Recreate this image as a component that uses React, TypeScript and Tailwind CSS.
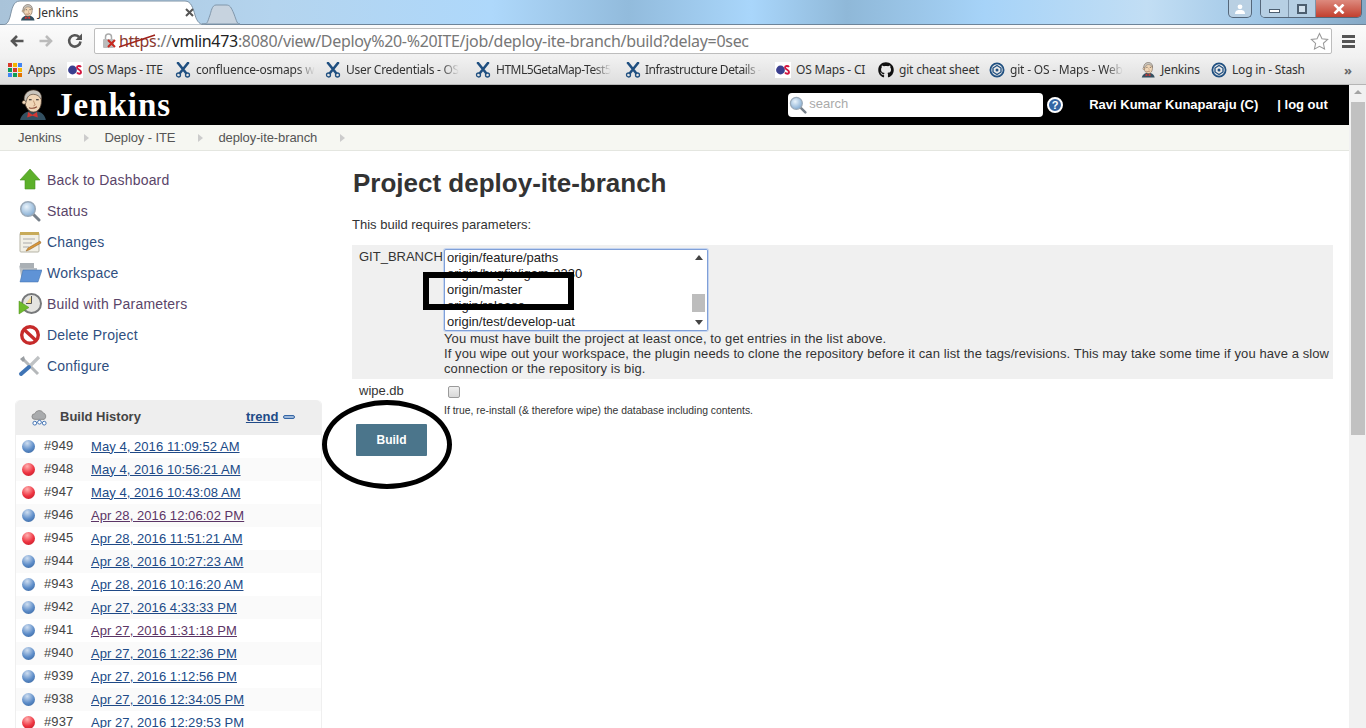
import { FaGithub } from "react-icons/fa";

function JenkinsHead({ className }: { className: string }) {
  return (
    <svg viewBox="0 0 32 36" className={className}>
      <path d="M2 35c1-6 6-9 10-10l9 0c5 1 9 4 10 10Z" fill="#335061" />
      <path d="M11 26l5 3 5-3 1 6-6-2-6 2Z" fill="#d33833" />
      <path d="M7 14C6 6 11 2 17 2s10 5 9 12c0 6-3 12-9 12-5 0-9-5-10-12Z" fill="#f0d6b7" stroke="#49382b" strokeWidth="1" />
      <path d="M7 14C5 6 11 1 17 1s10 4 9 11c-2-4-5-6-9-6-4 0-7 2-8 8Z" fill="#c9c5bd" stroke="#49382b" strokeWidth=".7" />
      <circle cx="6.5" cy="15" r="2.2" fill="#f0d6b7" stroke="#49382b" strokeWidth=".7" />
      <path d="M12 12h3M20 12h3" stroke="#231f20" strokeWidth="1.2" />
      <path d="M17 13l2 5-2 1" fill="none" stroke="#b98d6b" strokeWidth="1" />
      <path d="M12 21c3 1 6 1 9-1" fill="none" stroke="#8a4b38" strokeWidth="1.2" />
    </svg>
  );
}

function JiraX() {
  return (
    <svg viewBox="0 0 16 16" className="h-4 w-4 shrink-0">
      <path d="M3 1l8 10M13 1L5 11" stroke="#205081" strokeWidth="2.6" strokeLinecap="round" />
      <circle cx="3.5" cy="13" r="2" fill="none" stroke="#205081" strokeWidth="1.3" />
      <circle cx="12.5" cy="13" r="2" fill="none" stroke="#205081" strokeWidth="1.3" />
    </svg>
  );
}

function OsIcon() {
  return (
    <svg viewBox="0 0 16 16" className="h-4 w-4 shrink-0">
      <rect width="16" height="16" fill="#fff" />
      <circle cx="5.5" cy="8" r="4.4" fill="#3b3f8f" />
      <path d="M14 5c-1-1.500-4-1.500-4 .5s4 2 4 4.500-3 2-4 .5" fill="none" stroke="#d2163f" strokeWidth="1.900" />
    </svg>
  );
}

function StashIcon() {
  return (
    <svg viewBox="0 0 16 16" className="h-4 w-4 shrink-0">
      <circle cx="8" cy="8" r="6.600" fill="none" stroke="#205081" strokeWidth="1.800" />
      <path d="M8 3.500L12 6v4l-4 2.500L4 10V6Z" fill="none" stroke="#205081" strokeWidth="1.300" />
      <circle cx="8" cy="8" r="1.500" fill="#205081" />
    </svg>
  );
}

function AppsIcon() {
  const c = ["#d8392b", "#f4b400", "#4285f4", "#0f9d58", "#d8392b", "#f4b400", "#4285f4", "#0f9d58", "#e37400"];
  return (
    <svg viewBox="0 0 14 14" className="h-[14px] w-[14px] shrink-0">
      {c.map((f, i) => (
        <rect key={i} x={(i % 3) * 5} y={Math.floor(i / 3) * 5} width="4" height="4" fill={f} />
      ))}
    </svg>
  );
}

const bookmarks = [
  { icon: <AppsIcon />, label: "Apps", box: "w-[59px] ml-[8px]", gap: "gap-[6px]", text: "tracking-[-0.2px]" },
  { icon: <OsIcon />, label: "OS Maps - ITE", box: "w-[95px] ml-[0px]", gap: "gap-[5px]", text: "tracking-[-0.2px]" },
  { icon: <JiraX />, label: "confluence-osmaps w", box: "w-[137px] ml-[13px]", gap: "gap-[5px]", text: "tracking-[-0.2px] [mask-image:linear-gradient(90deg,#000_85%,transparent)]" },
  { icon: <JiraX />, label: "User Credentials - OS", box: "w-[134px] ml-[13px]", gap: "gap-[5px]", text: "tracking-[-0.3px] [mask-image:linear-gradient(90deg,#000_85%,transparent)]" },
  { icon: <JiraX />, label: "HTML5GetaMap-Test5", box: "w-[137px] ml-[16px]", gap: "gap-[5px]", text: "tracking-[-0.5px] [mask-image:linear-gradient(90deg,#000_85%,transparent)]" },
  { icon: <JiraX />, label: "Infrastructure Details -", box: "w-[137px] ml-[13px]", gap: "gap-[4px]", text: "tracking-[-0.45px] [mask-image:linear-gradient(90deg,#000_85%,transparent)]" },
  { icon: <OsIcon />, label: "OS Maps - CI", box: "w-[91px] ml-[13px]", gap: "gap-[5px]", text: "tracking-[-0.2px]" },
  { icon: <FaGithub className="h-4 w-4 shrink-0 text-[#111]" />, label: "git cheat sheet", box: "w-[100px] ml-[12px]", gap: "gap-[5px]", text: "tracking-[-0.2px]" },
  { icon: <StashIcon />, label: "git - OS - Maps - Web", box: "w-[137px] ml-[11px]", gap: "gap-[5px]", text: "tracking-[-0.2px] [mask-image:linear-gradient(90deg,#000_85%,transparent)]" },
  { icon: <JenkinsHead className="h-4 w-4 shrink-0" />, label: "Jenkins", box: "w-[59px] ml-[14px]", gap: "gap-[5px]", text: "tracking-[-0.2px]" },
  { icon: <StashIcon />, label: "Log in - Stash", box: "w-[95px] ml-[12px]", gap: "gap-[5px]", text: "tracking-[-0.2px]" },
];

function BrowserChrome() {
  return (
    <div className="shrink-0 font-['Noto_Sans',sans-serif]">
      <div className="relative h-[25px] border-b border-[#6d8499] bg-[linear-gradient(90deg,#a9c3d9_0%,#b4d4ee_20%,#aed8fb_36%,#92bbdc_46%,#a9d6fb_55%,#8fb8d8_62%,#a6d3f8_72%,#c2def4_84%,#9dc4e4_93%,#86a9c6_100%)]">
        <svg viewBox="0 0 245 25" className="absolute left-0 top-0 h-[25px] w-[245px]">
          <path d="M202 24c6 0 5-1 8-9 1-3 2-10 6-10h10c4 0 5 2 8 9 3 8 3 10 6 10Z" fill="#c7d3df" stroke="#8197ab" />
          <path d="M0 25c7 0 8-2 10-8 2-8 3-16 10-16h165c6 0 8 7 10 14 2 7 5 10 11 10Z" fill="#fff" stroke="#7f93a5" />
          <path d="M186 9l7 7M193 9l-7 7" stroke="#555" strokeWidth="2" />
        </svg>
        <div className="absolute left-[20px] top-[4px] flex items-center gap-[3px]">
          <JenkinsHead className="h-[17px] w-[15px]" />
          <span className="text-[12px] leading-4 text-[#333]">Jenkins</span>
        </div>
        <div className="absolute right-[114px] top-0 flex h-[18px] w-[24px] items-center justify-center rounded-b-[5px] border border-t-0 border-[#55677a] bg-[#b9d0e3]">
          <svg viewBox="0 0 12 10" className="h-[10px] w-3"><circle cx="6" cy="2.800" r="2.400" fill="#fff" /><path d="M1 10c0-4 3-4 5-4s5 0 5 4Z" fill="#fff" /></svg>
        </div>
        <div className="absolute right-[4px] top-0 flex h-[18px] w-[102px] overflow-hidden rounded-b-[5px] border border-t-0 border-[#55677a]">
          <div className="flex w-[28px] items-end justify-center border-r border-[#7d93a8] bg-[#b6cfe3] pb-[4px]"><div className="h-[4px] w-[11px] border border-[#4d5f70] bg-white" /></div>
          <div className="flex w-[27px] items-center justify-center border-r border-[#7d93a8] bg-[#b6cfe3]"><div className="h-[10px] w-[10px] border-2 border-[#4d5f70] bg-white/40" /></div>
          <div className="flex flex-1 items-center justify-center bg-[linear-gradient(180deg,#dd8a7e,#c2402f)]">
            <svg viewBox="0 0 12 10" className="h-[10px] w-3"><path d="M1.500 0.500l9 9M10.500 0.500l-9 9" stroke="#fff" strokeWidth="2.600" /></svg>
          </div>
        </div>
      </div>
      <div className="flex h-[32px] items-center bg-[linear-gradient(180deg,#fbfbfb,#f1f1f1)] pl-[9px] pr-[6px]">
        <svg viewBox="0 0 16 16" className="h-4 w-4"><path d="M14.500 8H3M8 3L3 8l5 5" fill="none" stroke="#555" strokeWidth="2.600" /></svg>
        <svg viewBox="0 0 16 16" className="ml-[13px] h-4 w-4"><path d="M1.500 8H13M8 3l5 5-5 5" fill="none" stroke="#bbb" strokeWidth="2.600" /></svg>
        <svg viewBox="0 0 16 16" className="ml-[13px] h-4 w-4"><path d="M13.500 8.500A5.700 5.700 0 1 1 12 4" fill="none" stroke="#555" strokeWidth="2.600" /><path d="M15 0.500v6.500H8.500Z" fill="#555" /></svg>
        <div className="relative ml-[11px] flex h-[26px] w-[1238px] items-center rounded-[2px] border border-[#bdbdbd] bg-white pl-[7px]">
          <svg viewBox="0 0 16 16" className="h-4 w-4 shrink-0">
            <rect x="1" y="6" width="11" height="9" rx="1" fill="#bbb" /><path d="M3.500 6V4a3 3 0 0 1 6 0v2" fill="none" stroke="#aaa" strokeWidth="1.500" />
            <path d="M6 7l7 7M13 7l-7 7" stroke="#c8281e" strokeWidth="2" />
          </svg>
          <span className="ml-[1px] whitespace-nowrap text-[16px] leading-6 tracking-[-0.31px] text-[#777]">
            <span className="text-[#8a3a30]">https</span>://<span className="text-[#222]">vmlin473</span>:8080/view/Deploy%20-%20ITE/job/deploy-ite-branch/build?delay=0sec
          </span>
          <svg viewBox="0 0 38 14" className="absolute left-[24px] top-[5px] h-[14px] w-[38px]"><path d="M0 13L36 1" stroke="#a0221a" strokeWidth="1.400" /></svg>
          <svg viewBox="0 0 20 20" className="absolute right-[2px] top-[3px] h-[19px] w-[19px]"><path d="M10 1.500l2.600 5.600 6 .7-4.500 4.100 1.200 6L10 15l-5.300 3 1.200-6L1.400 7.800l6-.7Z" fill="#fff" stroke="#999" strokeWidth="1.100" /></svg>
        </div>
        <div className="ml-[10px] flex w-[13px] flex-col gap-[2px]">
          <div className="h-[3px] bg-[#555]" /><div className="h-[3px] bg-[#555]" /><div className="h-[3px] bg-[#555]" />
        </div>
      </div>
      <div className="flex h-[28px] items-center border-b border-[#b5b5b5] bg-[linear-gradient(180deg,#f1f1f1,#dedede)] pb-[2px]">
        {bookmarks.map((b) => (
          <div key={b.label} className={`flex shrink-0 items-center ${b.box} ${b.gap}`}>
            {b.icon}
            <span className={`whitespace-nowrap text-[12px] leading-4 text-[#333] ${b.text}`}>{b.label}</span>
          </div>
        ))}
        <span className="ml-auto mr-[14px] text-[13px] font-bold leading-4 text-[#666]">»</span>
      </div>
    </div>
  );
}

function Arrow() {
  return <span className="ml-[23px] mr-[15px] h-0 w-0 border-y-[4px] border-l-[5px] border-y-transparent border-l-[#ccc]" />;
}

function SearchIcon({ className }: { className: string }) {
  return (
    <svg viewBox="0 0 22 22" className={className}>
      <defs>
        <radialGradient id="lens" cx=".4" cy=".35" r=".7"><stop offset="0" stopColor="#e9f3fb" /><stop offset="1" stopColor="#7fa9d1" /></radialGradient>
      </defs>
      <path d="M13.500 13.500L20 20" stroke="#77808a" strokeWidth="3" strokeLinecap="round" />
      <circle cx="9" cy="9" r="7.300" fill="url(#lens)" stroke="#9aa9b8" strokeWidth="1.500" />
    </svg>
  );
}

function Header() {
  return (
    <div className="flex h-[40px] items-center bg-black font-['Liberation_Sans',sans-serif]">
      <JenkinsHead className="ml-[18px] h-[32px] w-[29px]" />
      <span className="ml-[9px] font-['Liberation_Serif',serif] text-[33px] font-bold leading-9 tracking-[1px] text-white">Jenkins</span>
      <div className="ml-[617px] flex h-[24px] w-[255px] items-center rounded-[4px] bg-white pl-[1px]">
        <SearchIcon className="h-[18px] w-[18px]" />
        <span className="ml-[2px] -translate-y-[1px] text-[13px] leading-4 text-[#aaa]">search</span>
      </div>
      <div className="ml-[4px] flex h-[16px] w-[16px] items-center justify-center rounded-full border-2 border-white bg-[#3465a4] text-[11px] font-bold leading-none text-white">?</div>
      <span className="ml-[26px] whitespace-nowrap text-[13px] font-bold leading-4 text-white">Ravi Kumar Kunaparaju (C)</span>
      <span className="ml-[19px] whitespace-nowrap text-[13px] font-bold leading-4 text-white">| log out</span>
    </div>
  );
}

function Breadcrumb() {
  return (
    <div className="flex h-[26px] items-center border-b border-[#e4e6e0] bg-[#f6f7f2] pl-[18px] font-['Liberation_Sans',sans-serif] text-[13px] leading-4 tracking-[-0.1px] text-[#555]">
      <span>Jenkins</span><Arrow /><span>Deploy - ITE</span><Arrow /><span>deploy-ite-branch</span><Arrow />
    </div>
  );
}

const iconCls = "h-[22px] w-[24px] shrink-0";
const taskIcons = [
  <svg viewBox="0 0 24 22" className={iconCls}><path d="M12 0L22 11h-5v9H7v-9H2Z" fill="#5cb02a" stroke="#4a9321" strokeWidth=".6" /></svg>,
  <SearchIcon className={iconCls} />,
  <svg viewBox="0 0 24 22" className={iconCls}><rect x="2" y="2" width="19" height="19" rx="1" fill="#f2f0e6" stroke="#b5b3a5" /><rect x="2" y="1" width="19" height="3" fill="#c8ab5a" /><path d="M5 8h12M5 12h9M5 16h6" stroke="#aaa" strokeWidth="1" /><path d="M10 17l12-7 1 2-12 7-3 1Z" fill="#d9983a" stroke="#8a5a1e" strokeWidth=".5" /></svg>,
  <svg viewBox="0 0 24 22" className={iconCls}><path d="M2 1h14v5H2Z" fill="#aab0b5" /><path d="M1 3l3 17h15V6H3Z" fill="#b9bec2" /><path d="M5 8h19l-4 12H2Z" fill="#5f93d6" stroke="#3f6ea8" strokeWidth=".5" /></svg>,
  <svg viewBox="0 0 24 22" className={iconCls}><circle cx="13.500" cy="10.500" r="9.500" fill="#e4e4e0" stroke="#77797b" strokeWidth="2" /><path d="M13.500 3v7.500H8" fill="#f1d98b" stroke="#555" strokeWidth="1" /><path d="M1 8l10 6.500L1 21Z" fill="#6dbb2a" stroke="#4f8c1d" strokeWidth=".5" /></svg>,
  <svg viewBox="0 0 24 22" className={iconCls}><circle cx="12" cy="11" r="8.300" fill="#fff" stroke="#c62a2a" strokeWidth="3.400" /><path d="M6 5.500L18 16.500" stroke="#c62a2a" strokeWidth="3.400" /></svg>,
  <svg viewBox="0 0 24 22" className={iconCls}><path d="M4 3l16 16" stroke="#b5b8ba" strokeWidth="3" /><path d="M2 4l4-3 1 4-2 2Z" fill="#9a9ea2" /><path d="M21 2l-9 9" stroke="#bfc2c4" strokeWidth="3.200" /><path d="M11 12l-8 7" stroke="#3f74b5" strokeWidth="4" strokeLinecap="round" /></svg>,
];

const tasks = [
  { t: "Back to Dashboard", c: "text-[#5a4569]" },
  { t: "Status", c: "text-[#5a4569]" },
  { t: "Changes", c: "text-[#2f4f80]" },
  { t: "Workspace", c: "text-[#2f4f80]" },
  { t: "Build with Parameters", c: "text-[#5a4569]" },
  { t: "Delete Project", c: "text-[#2f4f80]" },
  { t: "Configure", c: "text-[#2f4f80]" },
];

const builds = [
  ["#949", "May 4, 2016 11:09:52 AM", "b", "v"],
  ["#948", "May 4, 2016 10:56:21 AM", "r", "v"],
  ["#947", "May 4, 2016 10:43:08 AM", "r", "v"],
  ["#946", "Apr 28, 2016 12:06:02 PM", "b", "p"],
  ["#945", "Apr 28, 2016 11:51:21 AM", "r", "v"],
  ["#944", "Apr 28, 2016 10:27:23 AM", "b", "v"],
  ["#943", "Apr 28, 2016 10:16:20 AM", "b", "v"],
  ["#942", "Apr 27, 2016 4:33:33 PM", "b", "v"],
  ["#941", "Apr 27, 2016 1:31:18 PM", "b", "p"],
  ["#940", "Apr 27, 2016 1:22:36 PM", "b", "v"],
  ["#939", "Apr 27, 2016 1:12:56 PM", "b", "v"],
  ["#938", "Apr 27, 2016 12:34:05 PM", "b", "v"],
  ["#937", "Apr 27, 2016 12:29:53 PM", "r", "v"],
];

function Ball({ red }: { red: boolean }) {
  return (
    <span
      className={
        red
          ? "h-[13px] w-[13px] shrink-0 rounded-full bg-[radial-gradient(circle_at_40%_25%,#ffb0b0,#ee3340_55%,#b31824)]"
          : "h-[13px] w-[13px] shrink-0 rounded-full bg-[radial-gradient(circle_at_40%_25%,#cfdef0,#5c8cc8_55%,#2f5c95)]"
      }
    />
  );
}

function Sidebar() {
  return (
    <div className="w-[322px] shrink-0 pl-[15px] pt-[13px]">
      <div className="flex flex-col pl-[3px]">
        {tasks.map((x, i) => (
          <div key={x.t} className="flex h-[31px] items-center gap-[5px]">
            {taskIcons[i]}
            <span className={`text-[14px] leading-5 tracking-[0.2px] ${x.c}`}>{x.t}</span>
          </div>
        ))}
      </div>
      <div className="mt-[19px] rounded-t-[5px] border-x border-[#efefef]">
        <div className="flex h-[35px] items-center rounded-t-[5px] bg-[#eeeeee] pb-[1px] pl-[15px]">
          <svg viewBox="0 0 18 18" className="h-[17px] w-[17px]">
            <path d="M4 11a3 3 0 0 1 0-6 5 5 0 0 1 9-1 4 4 0 0 1 1 7Z" fill="#a9abad" stroke="#777" strokeWidth=".7" />
            <circle cx="4" cy="15" r="2" fill="#fff" stroke="#3a6db0" />
            <circle cx="9" cy="14" r="2" fill="#fff" stroke="#3a6db0" />
            <circle cx="14" cy="15" r="2" fill="#fff" stroke="#3a6db0" />
          </svg>
          <span className="ml-[12px] text-[13px] font-bold leading-4 text-[#444]">Build History</span>
          <span className="ml-[105px] text-[13px] font-bold leading-4 text-[#204a87] underline">trend</span>
          <span className="ml-[5px] h-[4px] w-[12px] rounded-[2px] border border-[#3465a4] bg-[#9db8da]" />
        </div>
        {builds.map((b, i) => (
          <div key={b[0]} className={`flex h-[23px] items-center pl-[6px] ${i % 2 === 1 ? "bg-[#fafafa]" : "bg-white"}`}>
            <Ball red={b[2] === "r"} />
            <span className="ml-[9px] w-[47px] -translate-y-[1px] text-[13px] leading-4 tracking-[0.1px] text-[#444]">{b[0]}</span>
            <span className={`whitespace-nowrap text-[13px] leading-4 tracking-[0.06px] underline ${b[3] === "p" ? "text-[#5c3566]" : "text-[#204a87]"}`}>{b[1]}</span>
          </div>
        ))}
      </div>
    </div>
  );
}

function Main() {
  return (
    <div className="w-[1012px] shrink-0 pl-[31px]">
      <h1 className="mt-[16px] text-[26px] font-bold leading-8 text-[#333]">Project deploy-ite-branch</h1>
      <p className="-ml-[1px] mt-[18px] text-[13px] leading-4 text-[#333]">This build requires parameters:</p>
      <div className="-ml-[1px] mt-[12px] flex h-[134px] w-[981px] bg-[#f0f0f0] pl-[7px] pt-[4px]">
        <div className="w-[85px] shrink-0 text-[13px] leading-[15px] text-[#333]">GIT_BRANCH</div>
        <div className="min-w-0 flex-1 pr-[2px]">
          <div className="relative h-[82px] w-[264px] overflow-hidden rounded-[2px] border border-[#7f9fd8] bg-white pl-[2px] text-[13px] leading-4 text-[#222] shadow-[0_0_0_1px_#c5d5f0]">
            <div>origin/feature/paths</div>
            <div>origin/bugfix/igam-3330</div>
            <div>origin/master</div>
            <div>origin/release</div>
            <div>origin/test/develop-uat</div>
            <div className="absolute bottom-0 right-0 top-0 flex w-[17px] flex-col items-center justify-between bg-white py-[5px]">
              <span className="h-0 w-0 border-x-[4px] border-b-[5px] border-x-transparent border-b-[#444]" />
              <span className="absolute left-[2px] top-[44px] h-[18px] w-[13px] bg-[#bdbdbd]" />
              <span className="h-0 w-0 border-x-[4px] border-t-[5px] border-x-transparent border-t-[#444]" />
            </div>
          </div>
          <div className="text-[13px] leading-[15px] tracking-[0.095px] text-[#333]">
            <div>You must have built the project at least once, to get entries in the list above.</div>
            <div>If you wipe out your workspace, the plugin needs to clone the repository before it can list the tags/revisions. This may take some time if you have a slow connection or the repository is big.</div>
          </div>
        </div>
      </div>
      <div className="-ml-[1px] flex pl-[7px]">
        <div className="w-[85px] shrink-0 pt-[4px] text-[13px] leading-[15px] text-[#333]">wipe.db</div>
        <div>
          <div className="ml-[4px] mt-[7px] h-[12px] w-[12px] rounded-[2px] border border-[#9a9a9a] bg-[linear-gradient(180deg,#f0f0f0,#d8d8d8)]" />
          <div className="mt-[7px] text-[10.4px] leading-3 text-[#333]">If true, re-install (&amp; therefore wipe) the database including contents.</div>
        </div>
      </div>
      <div className="ml-[3px] mt-[7px] flex h-[32px] w-[71px] items-center justify-center rounded-[1px] bg-[#4b758b] text-[12px] font-bold leading-4 text-white">Build</div>
    </div>
  );
}

function Scrollbar() {
  return (
    <div className="flex w-[17px] shrink-0 flex-col items-center bg-[#f1f1f1]">
      <span className="mt-[5px] h-0 w-0 border-x-[4px] border-b-[4px] border-x-transparent border-b-[#a3a3a3]" />
      <div className="mt-[8px] h-[333px] w-[14px] bg-[#c1c1c1]" />
    </div>
  );
}

export default function App() {
  return (
    <div className="relative flex h-[728px] w-[1366px] flex-col overflow-hidden bg-white font-['Liberation_Sans',sans-serif]">
      <BrowserChrome />
      <div className="flex min-h-0 flex-1">
        <div className="flex w-[1349px] shrink-0 flex-col">
          <Header />
          <Breadcrumb />
          <div className="flex min-h-0 flex-1">
            <Sidebar />
            <Main />
          </div>
        </div>
        <Scrollbar />
      </div>
      <div className="absolute left-[423px] top-[272px] h-[38px] w-[151px] border-[6px] border-black" />
      <div className="absolute left-[322px] top-[400px] h-[89px] w-[130px] rounded-[50%] border-[5px] border-black" />
    </div>
  );
}
